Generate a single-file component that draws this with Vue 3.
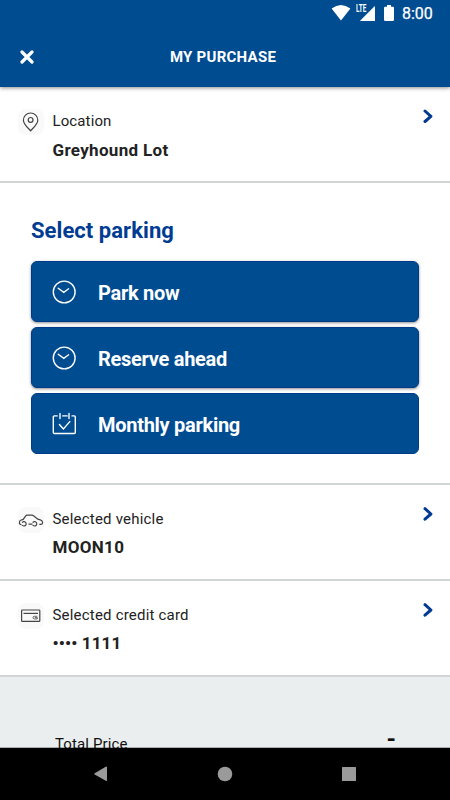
<script setup>
const options = [
  { label: 'Park now', icon: 'clock' },
  { label: 'Reserve ahead', icon: 'clock' },
  { label: 'Monthly parking', icon: 'calendar' },
]
</script>

<template>
  <div class="screen">
    <header class="header">
      <div class="status">
        <svg class="wifi" width="20" height="16" viewBox="0 0 20 16"><path d="M.6 3.6Q10-3.400 19.400 3.600L10 15.500Z" /></svg>
        <svg class="signal" width="15" height="15" viewBox="0 0 15 15"><path d="M.5 15Q-.2 15 .3 14.500L14.300.5Q15 0 15 .8V14.500Q15 15 14.500 15Z" /></svg>
        <span class="lte">LTE</span>
        <svg class="battery" width="10" height="16" viewBox="0 0 10 16"><path d="M3 0h4v1.700H8.700q1.300 0 1.300 1.300v11.700q0 1.300-1.300 1.300H1.300Q0 16 0 14.700V3q0-1.300 1.300-1.300H3Z" /></svg>
        <span class="time">8:00</span>
      </div>
      <div class="titlebar">
        <svg class="close" width="14" height="14" viewBox="0 0 14 14"><path d="M2 2 12 12M12 2 2 12" /></svg>
        <h1>MY PURCHASE</h1>
      </div>
    </header>

    <main class="content">
      <section class="row first">
        <span class="badge">
          <svg width="26" height="26" viewBox="0 0 26 26"><path d="M12.600 21.800C10.100 19 5.400 15.200 5.400 11.200a7.200 7.200 0 0 1 14.400 0c0 4-4.700 7.800-7.200 10.600Z" /><circle cx="12.600" cy="10.900" r="2.400" /></svg>
        </span>
        <div class="info"><span class="label location">Location</span><strong>Greyhound Lot</strong></div>
        <svg class="chevron" width="11" height="14" viewBox="0 0 11 14"><path d="M2 2 7.900 7.300 2 12.500" /></svg>
      </section>

      <section class="parking">
        <h2>Select parking</h2>
        <div class="options">
          <button v-for="option in options" :key="option.label" type="button">
            <svg v-if="option.icon === 'clock'" width="26" height="26" viewBox="0 0 26 26"><circle cx="13.200" cy="13" r="10.900" /><path d="m7.200 9.200 5.600 4.100 4.800-3.500" /></svg>
            <svg v-else width="26" height="26" viewBox="0 0 26 26"><path d="M6.200 4.900H3.300a1 1 0 0 0-1 1v15.600a1 1 0 0 0 1 1h20a1 1 0 0 0 1-1V5.900a1 1 0 0 0-1-1h-2.300M9 2.500v5M11.700 4.900h4.400M18 2.500v5M8.400 13.500l4 4.500 6.400-7.400" /></svg>
            <span>{{ option.label }}</span>
          </button>
        </div>
      </section>

      <section class="row">
        <span class="badge">
          <svg width="26" height="26" viewBox="0 0 26 26"><path d="M3.400 17.700Q1.400 17.700 1.400 15.500q0-1.700 1.300-2.200l2.500-.9 2.500-3.500q.5-.7 1.300-.7h5q.8 0 1.500.5l4.300 3.500 2.500.6q2.300.6 2.300 2.700 0 1.800-1.600 1.900h-1.700M10.500 17.200h4" /><path d="M4.100 15.600a2.200 2.200 0 1 1 0 2.400M14.700 15.600a2.200 2.200 0 1 1 0 2.400" /></svg>
        </span>
        <div class="info"><span class="label">Selected vehicle</span><strong>MOON10</strong></div>
        <svg class="chevron" width="11" height="14" viewBox="0 0 11 14"><path d="M2 1.700 7.900 7 2 12.200" /></svg>
      </section>

      <section class="row">
        <span class="badge">
          <svg width="26" height="26" viewBox="0 0 26 26"><rect x="3.600" y="7" width="18.200" height="11.400" rx=".7" /><path d="M5.500 10.400h14.500" /><path class="chip" d="M19.300 13.300h-3a1.300 1.300 0 0 0 0 2.600h3M16.800 14.600h2.500v1.300" /></svg>
        </span>
        <div class="info"><span class="label">Selected credit card</span><strong class="number">•••• 1111</strong></div>
        <svg class="chevron" width="11" height="14" viewBox="0 0 11 14"><path d="M2 1.700 7.900 7 2 12.200" /></svg>
      </section>

      <section class="total">
        <span>Total Price</span>
        <strong>-</strong>
      </section>
    </main>

    <nav class="nav">
      <svg width="14" height="16" viewBox="0 0 14 16"><path d="M.7 7.200 11.700.8Q13 .2 13 1.500v12.700q0 1.200-1.200.6L.7 8.600q-.9-.7 0-1.400Z" /></svg>
      <svg width="16" height="16" viewBox="0 0 16 16"><circle cx="8" cy="8" r="7.300" /></svg>
      <svg width="14" height="14" viewBox="0 0 14 14"><rect width="14" height="14" rx=".5" /></svg>
    </nav>
  </div>
</template>

<style>
body { margin: 0; }
</style>

<style scoped>
.screen { width: 450px; height: 800px; display: flex; flex-direction: column; overflow: hidden; background: #fff; color: #222; font-family: Roboto, sans-serif; }
.header { height: 87px; flex: none; background: #004c91; color: #fff; box-shadow: 0 1px 4px rgba(0, 0, 0, .45); position: relative; }
.status { height: 28px; display: flex; align-items: center; padding-left: 331px; position: relative; }
.status svg { fill: #fff; flex: none; }
.wifi { margin-top: -3px; }
.signal { margin: -1px 0 0 9px; }
.battery { margin: -2px 0 0 9px; }
.time { font-size: 16px; line-height: 20px; margin-left: 8px; -webkit-text-stroke: .25px #fff; }
.lte { position: absolute; left: 356px; top: 4px; font-size: 10px; line-height: 10px; font-weight: 700; transform: scaleX(.64); transform-origin: left; }
.titlebar { height: 57px; display: grid; grid-template-columns: 50px 1fr 54px; align-items: center; }
.close { margin-left: 20px; fill: none; stroke: #fff; stroke-width: 3.2; stroke-linecap: round; }
h1 { margin: 0; text-align: center; font-size: 15px; line-height: 20px; font-weight: 700; letter-spacing: .25px; }
.content { height: 661px; overflow: hidden; }
.row { box-sizing: border-box; height: 96px; display: flex; align-items: flex-start; border-bottom: 2px solid #d1d5d5; padding: 22px 16px 0 18px; }
.badge { width: 26px; height: 26px; flex: none; border-radius: 8px; background: #f9f9f9; }
.badge svg { display: block; fill: none; stroke: #444; stroke-width: 1.2; }
.badge .chip { stroke-width: .8; }
.info { display: flex; flex-direction: column; flex: 1; margin-left: 8.5px; padding-top: 2px; }
.label { font-size: 15px; line-height: 20px; letter-spacing: .2px; }
.label.location { letter-spacing: .12px; }
.info strong { font-size: 17px; line-height: 22px; font-weight: 700; margin-top: 7px; letter-spacing: .32px; }
.first .info strong { margin-top: 8px; }
.info .number { letter-spacing: .12px; }
.chevron { fill: none; stroke: #003b91; stroke-width: 3; stroke-linecap: round; stroke-linejoin: round; }
.parking { box-sizing: border-box; height: 302px; padding: 33px 31px 0; border-bottom: 2px solid #d1d5d5; }
h2 { margin: 0; font-size: 22px; line-height: 30px; font-weight: 700; letter-spacing: .05px; color: #003c91; }
.options { display: flex; flex-direction: column; gap: 5px; margin-top: 15px; }
button { height: 61px; border: 1px solid #003a8a; border-radius: 6px; background: #004c91; color: #fff; box-shadow: 0 1px 3px rgba(0, 0, 0, .45); display: flex; align-items: center; padding: 0 19px; font-family: inherit; font-size: 20px; font-weight: 700; line-height: 26px; text-align: left; letter-spacing: -.28px; }
button span { padding-top: 2px; }
button svg { fill: none; stroke: #fff; stroke-width: 1.4; flex: none; margin-right: 21px; stroke-linecap: round; }
button:last-child { box-shadow: none; }
.total { height: 71px; background: #eaeeef; border-bottom: 1px solid #aaadae; display: flex; justify-content: space-between; align-items: flex-start; padding: 57px 54px 0 55px; box-sizing: border-box; font-size: 15px; line-height: 20px; letter-spacing: .12px; color: #111; }
.total strong { font-size: 24px; line-height: 10px; }
.nav { height: 52px; flex: none; background: #000; display: flex; justify-content: space-between; align-items: center; padding: 0 94px; box-sizing: border-box; }
.nav svg { fill: #9a9a9a; }
</style>
